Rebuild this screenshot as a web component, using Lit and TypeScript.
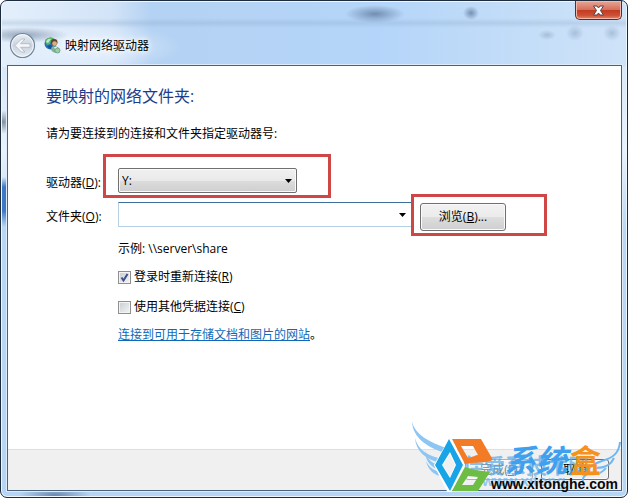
import { LitElement, html, css } from "lit";
import { customElement, state } from "lit/decorators.js";

@customElement("site-watermark")
class SiteWatermark extends LitElement {
  static styles = css`
    :host {
      display: block;
      pointer-events: none;
    }
    svg {
      display: block;
    }
    .ghost {
      font: bold 21px "Noto Sans CJK SC", sans-serif;
      fill: #58a9e6;
      opacity: 0.7;
    }
    .ghost-url {
      font: bold 15px "Liberation Sans", sans-serif;
      fill: #6db6f0;
      opacity: 0.7;
    }
    .brand {
      font: bold 31px "Noto Sans CJK SC", sans-serif;
      fill: #3ea0ee;
    }
    .slant {
      font-style: italic;
    }
    .box {
      fill: #f5921e;
    }
    .url {
      font: bold 14px "Liberation Sans", sans-serif;
      fill: #080808;
    }
  `;

  render() {
    return html`
      <svg width="228" height="88" viewBox="0 0 228 88" aria-hidden="true">
        <g fill="#8cc6f5">
          <path d="M12 12C15 24 28 32 49 39L45 43C26 37 13 27 12 12Z" />
          <path d="M15 28C18 40 28 46 43 49L40 53C25 49 16 41 15 28Z" />
          <path d="M25 40C26 48 31 53 39 55L37 59C29 56 25 49 25 40Z" />
          <path d="M26 51C29 57 33 60 40 62L43 67C34 65 28 60 26 51Z" />
        </g>
        <g fill="none" stroke="#6db8f2" stroke-width="2">
          <path d="M220 32C219 44 212 48 202 51C193 54 188 57 187 64" />
          <path d="M214 48C211 55 204 58 196 58" />
          <path d="M206 58C202 63 196 65 190 64C184 64 181 69 184 75" />
        </g>
        <text class="ghost" x="63" y="63">佳爱系技术网</text>
        <text class="ghost-url" x="82" y="76">www.xitong</text>
        <path d="M35 55L50 29L64 55L51 81H48ZM42 55L50 69L56 55L50 42Z" fill="#fff" stroke="#fff" stroke-width="2" />
        <path fill="#18a4e6" fill-rule="evenodd" d="M35 55L49 29L63 55L50 81ZM42 55L50 68L56 55L50 42Z" />
        <path fill="#f47b25" fill-rule="evenodd" d="M52 29H81L93 50L86 52L72 53L65 54ZM61 36L68 48L78 45L73 36Z" />
        <path fill="#6dbd45" fill-rule="evenodd" d="M65 57L75 60L90 62L78 81H52ZM68 66L62 75H73L78 67Z" />
        <text class="brand slant" x="105" y="62">系统</text>
        <text class="brand box" x="170" y="62">盒</text>
        <text class="url" x="91" y="79">www.xitonghe.com</text>
      </svg>
    `;
  }
}

@customElement("app-root")
class AppRoot extends LitElement {
  @state() reconnect = true;
  @state() otherCredentials = false;

  static styles = css`
    :host {
      display: block;
      font: 12px/16px "Open Sans", "Noto Sans CJK SC", sans-serif;
      color: #000;
    }
    * {
      box-sizing: border-box;
    }
    button,
    input,
    select {
      font: inherit;
      color: inherit;
      margin: 0;
    }
    .window {
      position: relative;
      display: flex;
      flex-direction: column;
      min-height: 100vh;
      padding: 0 5px 6px 6px;
      border: 1px solid #1e2b3c;
      border-radius: 7px;
      box-shadow: inset 0 0 0 1px #eef7ff;
      background:
        radial-gradient(ellipse 30px 9px at 374px 13px, #4a6486a0, #4a648600),
        radial-gradient(ellipse 8px 7px at 470px 12px, #3c567a90, #3c567a00),
        radial-gradient(ellipse 9px 5px at 546px 34px, #6c88a860, #6c88a800),
        radial-gradient(ellipse 9px 8px at 574px 32px, #6c88a860, #6c88a800),
        radial-gradient(ellipse 9px 8px at 611px 32px, #6c88a860, #6c88a800),
        radial-gradient(ellipse 46px 8px at 22px 34px, #5c708c90, #5c708c00),
        radial-gradient(ellipse 90px 24px at 90px 46px, #eef6ffd0, #eef6ff00),
        radial-gradient(ellipse 12px 12px at 2px 121px, #8190a0, #6e7f9000),
        linear-gradient(#3b72bf00, #3f78c4 10px, #3f78c4 34px, #3b72bf00) 0 176px / 7px 50px no-repeat,
        radial-gradient(ellipse 36px 8px at 54px 494px, #46658cb0, #46658c00),
        linear-gradient(#7f9fc000 17px, #7f9fc040 22px, #7f9fc000 27px) 0 0 / 100% 66px no-repeat,
        linear-gradient(90deg, #e4effb 0, #d3e4f8 110px, #b4d2f3 150px, #b4d5f9 60%, #cfe3f8 100%) 0 0 / 100% 66px no-repeat,
        linear-gradient(#d8e8f8 60px, #e8f2fb 150px, #b8d6f5 230px, #b6d5f5);
      background-color: #b8d6f5;
    }
    .titlebar {
      display: flex;
      justify-content: space-between;
      min-height: 64px;
    }
    .caption {
      display: flex;
      align-items: center;
      align-self: flex-end;
      padding: 0 0 6px 2px;
    }
    .back {
      width: 27px;
      height: 27px;
      padding: 0;
      border: 0;
      background: none;
    }
    .back svg,
    .net svg {
      display: block;
    }
    .net {
      margin: 0 4px 0 8px;
    }
    .title {
      margin: 0;
      font-size: 12px;
      font-weight: 400;
      text-shadow: 0 0 6px #fff, 0 0 6px #fff;
    }
    .close {
      display: grid;
      place-items: center;
      width: 47px;
      height: 19px;
      padding: 0;
      border: 1px solid #5b2930;
      border-top: 0;
      border-radius: 0 0 5px 5px;
      box-shadow: inset 0 0 0 1px #f1b8ab;
      background: linear-gradient(#e7a696, #d5705b 48%, #c03a22 50%, #cf5034 80%, #e08a62);
    }
    .page {
      flex: 1;
      display: flex;
      flex-direction: column;
      border: 1px solid #49637f;
      background: #fff;
      box-shadow: 0 0 0 1px #dcecfb;
    }
    .body {
      flex: 1;
      padding: 18px 115px 24px 38px;
    }
    .heading {
      margin: 0 0 18px;
      font-size: 16px;
      line-height: 24px;
      font-weight: 400;
      color: #1a3e8c;
    }
    .intro {
      margin: 0 0 26px;
    }
    .row {
      display: grid;
      grid-template-columns: 72px 1fr;
    }
    .row + .row {
      margin-top: 9px;
    }
    .name {
      padding-top: 7px;
    }
    .key {
      text-decoration: underline;
    }
    .field {
      position: relative;
      display: flex;
    }
    .drive {
      position: relative;
      width: 179px;
    }
    .drive select {
      appearance: none;
      display: block;
      width: 100%;
      height: 25px;
      padding: 0 24px 0 3px;
      border: 1px solid #707070;
      border-radius: 2px;
      box-shadow: inset 0 0 0 1px #fafafa;
      background: linear-gradient(#f1f1f1, #e9e9e9 50%, #dcdcdc 52%, #cfcfcf);
    }
    .arrow {
      display: block;
    }
    .drive .arrow {
      position: absolute;
      right: 5px;
      top: 11px;
      pointer-events: none;
    }
    .combo {
      flex: 1;
      display: flex;
      height: 25px;
      min-width: 0;
      border: 1px solid #b5cfe7;
      border-top-color: #3d6f9c;
      background: #fff;
    }
    .combo input {
      flex: 1;
      min-width: 0;
      padding: 0 4px;
      border: 0;
      outline: 0;
      background: none;
    }
    .drop {
      display: grid;
      place-items: center;
      width: 18px;
      padding: 0;
      border: 0;
      background: none;
    }
    .browse {
      width: 86px;
      height: 28px;
      margin: 1px 0 0 8px;
    }
    .push {
      padding: 0;
      border: 1px solid #707070;
      border-radius: 3px;
      box-shadow: inset 0 0 0 1px #fafafa;
      background: linear-gradient(#f2f2f2, #ebebeb 50%, #dddddd 52%, #cfcfcf);
    }
    .callout {
      position: absolute;
      border: 3px solid #cf4647;
      pointer-events: none;
    }
    .callout-drive {
      left: -15px;
      top: -14px;
      width: 228px;
      height: 44px;
    }
    .callout-browse {
      right: -41px;
      top: -8px;
      width: 136px;
      height: 42px;
    }
    .options {
      display: flex;
      flex-direction: column;
      align-items: flex-start;
      gap: 12px;
      padding: 10px 0 0 72px;
    }
    .options p {
      margin: 0;
    }
    .check {
      display: flex;
      align-items: center;
      gap: 3px;
    }
    .check + .check {
      margin: 2px 0 0;
    }
    .check input {
      appearance: none;
      display: block;
      width: 13px;
      height: 13px;
      border: 1px solid #8e8f8f;
      background: linear-gradient(135deg, #c9cdd1, #f4f4f4);
      box-shadow: inset 0 0 0 1px #f4f4f4;
    }
    .tick {
      position: relative;
    }
    .tick svg {
      position: absolute;
      left: 0;
      top: 0;
      pointer-events: none;
    }
    a {
      color: #0f68b8;
      text-decoration: underline;
    }
    .footer {
      display: flex;
      justify-content: flex-end;
      gap: 8px;
      min-height: 41px;
      padding: 9px 12px;
      border-top: 1px solid #dfdfdf;
      background: #f0f0f0;
    }
    .footer .push {
      width: 68px;
      height: 21px;
      background: #f0f0f0;
    }
    .footer .push:disabled {
      color: #838383;
      border-color: #adb2b5;
      background: #f4f4f4;
    }
    .watermark {
      position: absolute;
      right: -1px;
      bottom: -1px;
    }
  `;

  private arrow() {
    return html`<svg class="arrow" width="7" height="4" viewBox="0 0 7 4" aria-hidden="true"><path d="M0 0H7L3.5 4Z" /></svg>`;
  }

  render() {
    return html`
      <div class="window">
        <header class="titlebar">
          <div class="caption">
            <button class="back" aria-label="后退">
              <svg width="27" height="27" viewBox="0 0 27 27">
                <defs>
                  <linearGradient id="disc" x1="0" y1="0" x2="0" y2="1">
                    <stop offset="0" stop-color="#e9eef4" />
                    <stop offset=".5" stop-color="#cbd4de" />
                    <stop offset="1" stop-color="#e3ebf3" />
                  </linearGradient>
                </defs>
                <circle cx="13.5" cy="13.5" r="12" fill="url(#disc)" stroke="#72839a" stroke-width="1.2" />
                <circle cx="13.5" cy="13.5" r="10.8" fill="none" stroke="#f5f9fd" stroke-width="1" />
                <path d="M6 13.5L12.5 7H16L11.5 11.7H21V15.3H11.5L16 20H12.5Z" fill="#f5f7fa" stroke="#a9b5c3" stroke-width=".8" />
              </svg>
            </button>
            <span class="net">
              <svg width="17" height="17" viewBox="0 0 17 17" aria-hidden="true">
                <circle cx="6.5" cy="6.5" r="6" fill="#2674b8" />
                <path d="M1 4C3 0 8 0 10 2L7 4L6 7L3 8Z" fill="#5cb85a" />
                <path d="M2 5C3 2 5 1 7 2L4 6Z" fill="#b9e4ee" />
                <path d="M3 9L7 8L9 12L6 12Z" fill="#154f96" />
                <circle cx="10.2" cy="5.3" r="3.3" fill="#5e4530" />
                <circle cx="10.6" cy="6.6" r="2.4" fill="#d8ad87" />
                <path d="M7 13C7 9 9 9 11 9.5C14 9.5 16 11 16 15C13 17 9 16 7 13Z" fill="#7fb292" />
                <path d="M10 10L12 14L13 10Z" fill="#e6f3ea" />
                <circle cx="13.5" cy="13.5" r="2.5" fill="#a2c8ad" stroke="#639a78" stroke-width=".7" />
              </svg>
            </span>
            <h1 class="title">映射网络驱动器</h1>
          </div>
          <button class="close" aria-label="关闭">
            <svg width="13" height="11" viewBox="0 0 13 11">
              <path d="M1.5 1H5L6.5 3L8 1H11.5L8.5 5.5L11.5 10H8L6.5 8L5 10H1.5L4.5 5.5Z" fill="#fff" stroke="#5a4148" stroke-width="1" />
            </svg>
          </button>
        </header>

        <main class="page">
          <div class="body">
            <h2 class="heading">要映射的网络文件夹:</h2>
            <p class="intro">请为要连接到的连接和文件夹指定驱动器号:</p>

            <div class="row">
              <label class="name" for="drive">驱动器(<span class="key">D</span>):</label>
              <div class="field">
                <div class="drive">
                  <select id="drive">
                    <option>Y:</option>
                  </select>
                  ${this.arrow()}
                </div>
                <div class="callout callout-drive"></div>
              </div>
            </div>

            <div class="row">
              <label class="name" for="folder">文件夹(<span class="key">O</span>):</label>
              <div class="field">
                <div class="combo">
                  <input id="folder" type="text" />
                  <button class="drop" aria-label="展开">${this.arrow()}</button>
                </div>
                <button class="push browse">浏览(<span class="key">B</span>)...</button>
                <div class="callout callout-browse"></div>
              </div>
            </div>

            <div class="options">
              <p>示例: \\\\server\\share</p>
              <label class="check">
                <span class="tick">
                  <input
                    type="checkbox"
                    .checked=${this.reconnect}
                    @change=${(e: Event) => (this.reconnect = (e.target as HTMLInputElement).checked)}
                  />
                  ${this.reconnect
                    ? html`<svg width="13" height="13" viewBox="0 0 13 13"><path d="M3.5 6.5L5.5 9.5L9.5 3" fill="none" stroke="#3b4f8c" stroke-width="2" /></svg>`
                    : ""}
                </span>
                <span>登录时重新连接(<span class="key">R</span>)</span>
              </label>
              <label class="check">
                <span class="tick">
                  <input
                    type="checkbox"
                    .checked=${this.otherCredentials}
                    @change=${(e: Event) => (this.otherCredentials = (e.target as HTMLInputElement).checked)}
                  />
                </span>
                <span>使用其他凭据连接(<span class="key">C</span>)</span>
              </label>
              <p><a href="#">连接到可用于存储文档和图片的网站</a>。</p>
            </div>
          </div>

          <footer class="footer">
            <button class="push" disabled>完成(<span class="key">F</span>)</button>
            <button class="push">取消</button>
          </footer>
        </main>

        <site-watermark class="watermark"></site-watermark>
      </div>
    `;
  }
}
